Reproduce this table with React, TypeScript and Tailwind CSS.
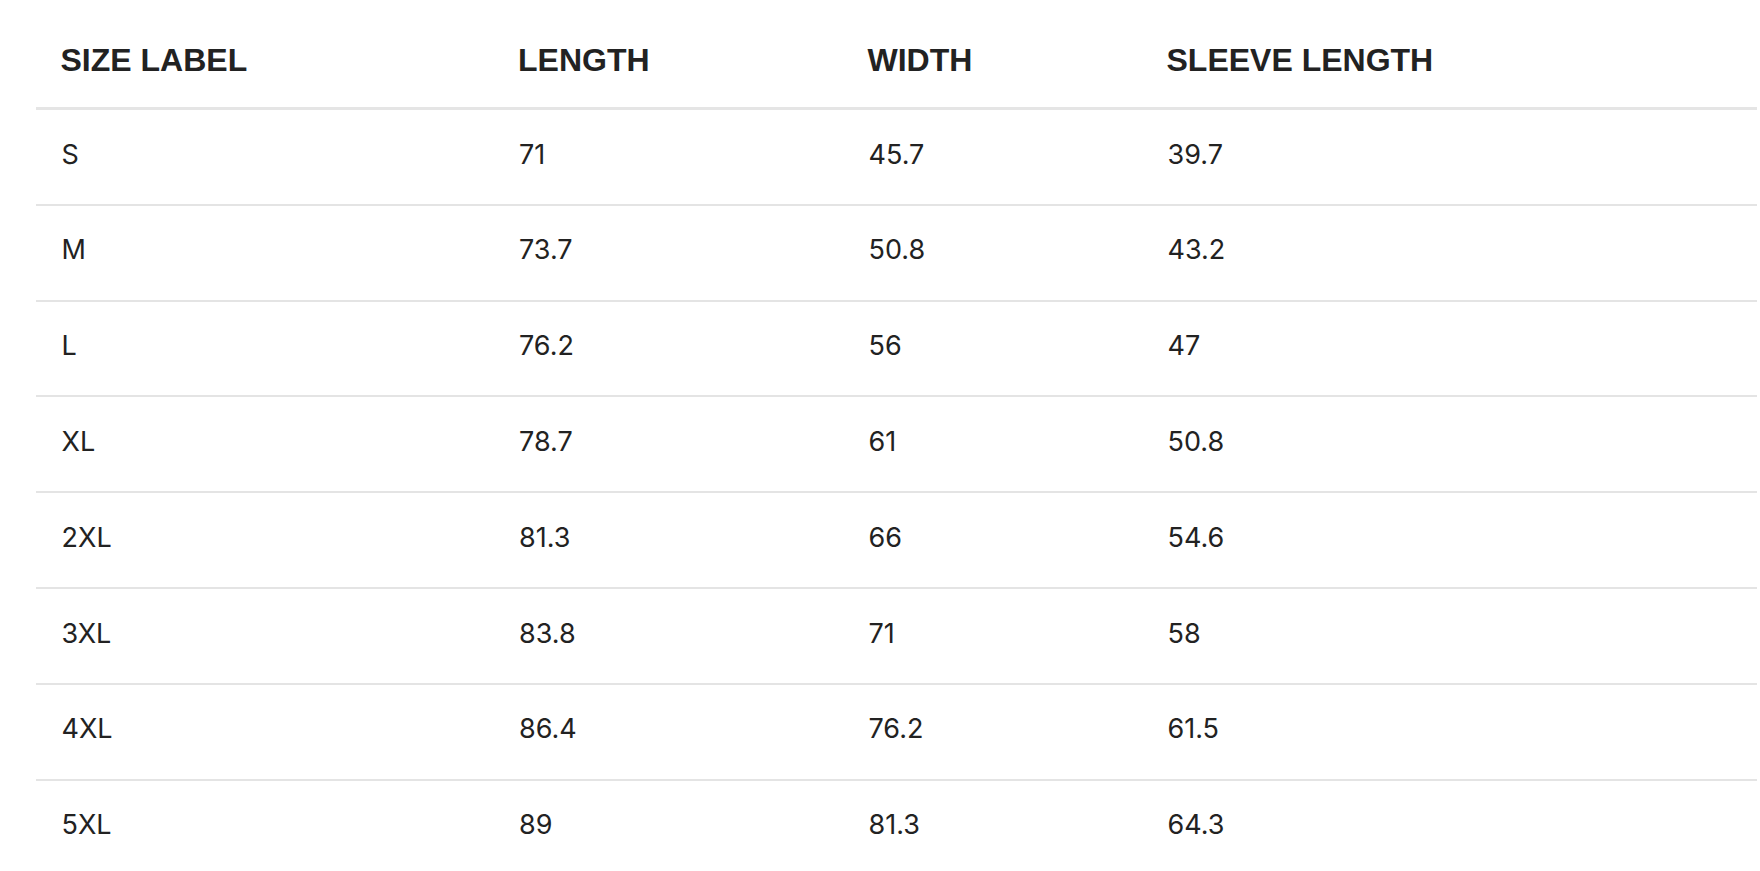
import React from "react";

const rows = [
  ["S", "71", "45.7", "39.7"],
  ["M", "73.7", "50.8", "43.2"],
  ["L", "76.2", "56", "47"],
  ["XL", "78.7", "61", "50.8"],
  ["2XL", "81.3", "66", "54.6"],
  ["3XL", "83.8", "71", "58"],
  ["4XL", "86.4", "76.2", "61.5"],
  ["5XL", "89", "81.3", "64.3"],
];

const headers = ["SIZE LABEL", "LENGTH", "WIDTH", "SLEEVE LENGTH"];

export default function App() {
  return (
    <div className="h-[871px] overflow-hidden bg-white">
      <div className="ml-[36px] mr-[3px]">
        {/* header */}
        <div className="grid grid-cols-[457.5px_349.5px_299px_1fr] h-[110px] pt-[12px] border-b-[3px] border-[#e5e5e5] font-['Liberation_Sans',Arial,sans-serif] text-[32px] font-bold text-[#222]">
          {headers.map((h) => (
            <div key={h} className="flex items-center pl-[24.5px]">
              {h}
            </div>
          ))}
        </div>

        {/* body */}
        {rows.map((r) => (
          <div
            key={r[0]}
            className="grid grid-cols-[457.5px_349.5px_299px_1fr] h-[95.8px] border-b-2 border-[#e4e4e4] font-['Inter',sans-serif] text-[27px] text-[#222]"
          >
            {r.map((c, i) => (
              <div key={i} className="flex items-center pl-[25.5px] pb-[4px]">
                {c}
              </div>
            ))}
          </div>
        ))}
      </div>
    </div>
  );
}
